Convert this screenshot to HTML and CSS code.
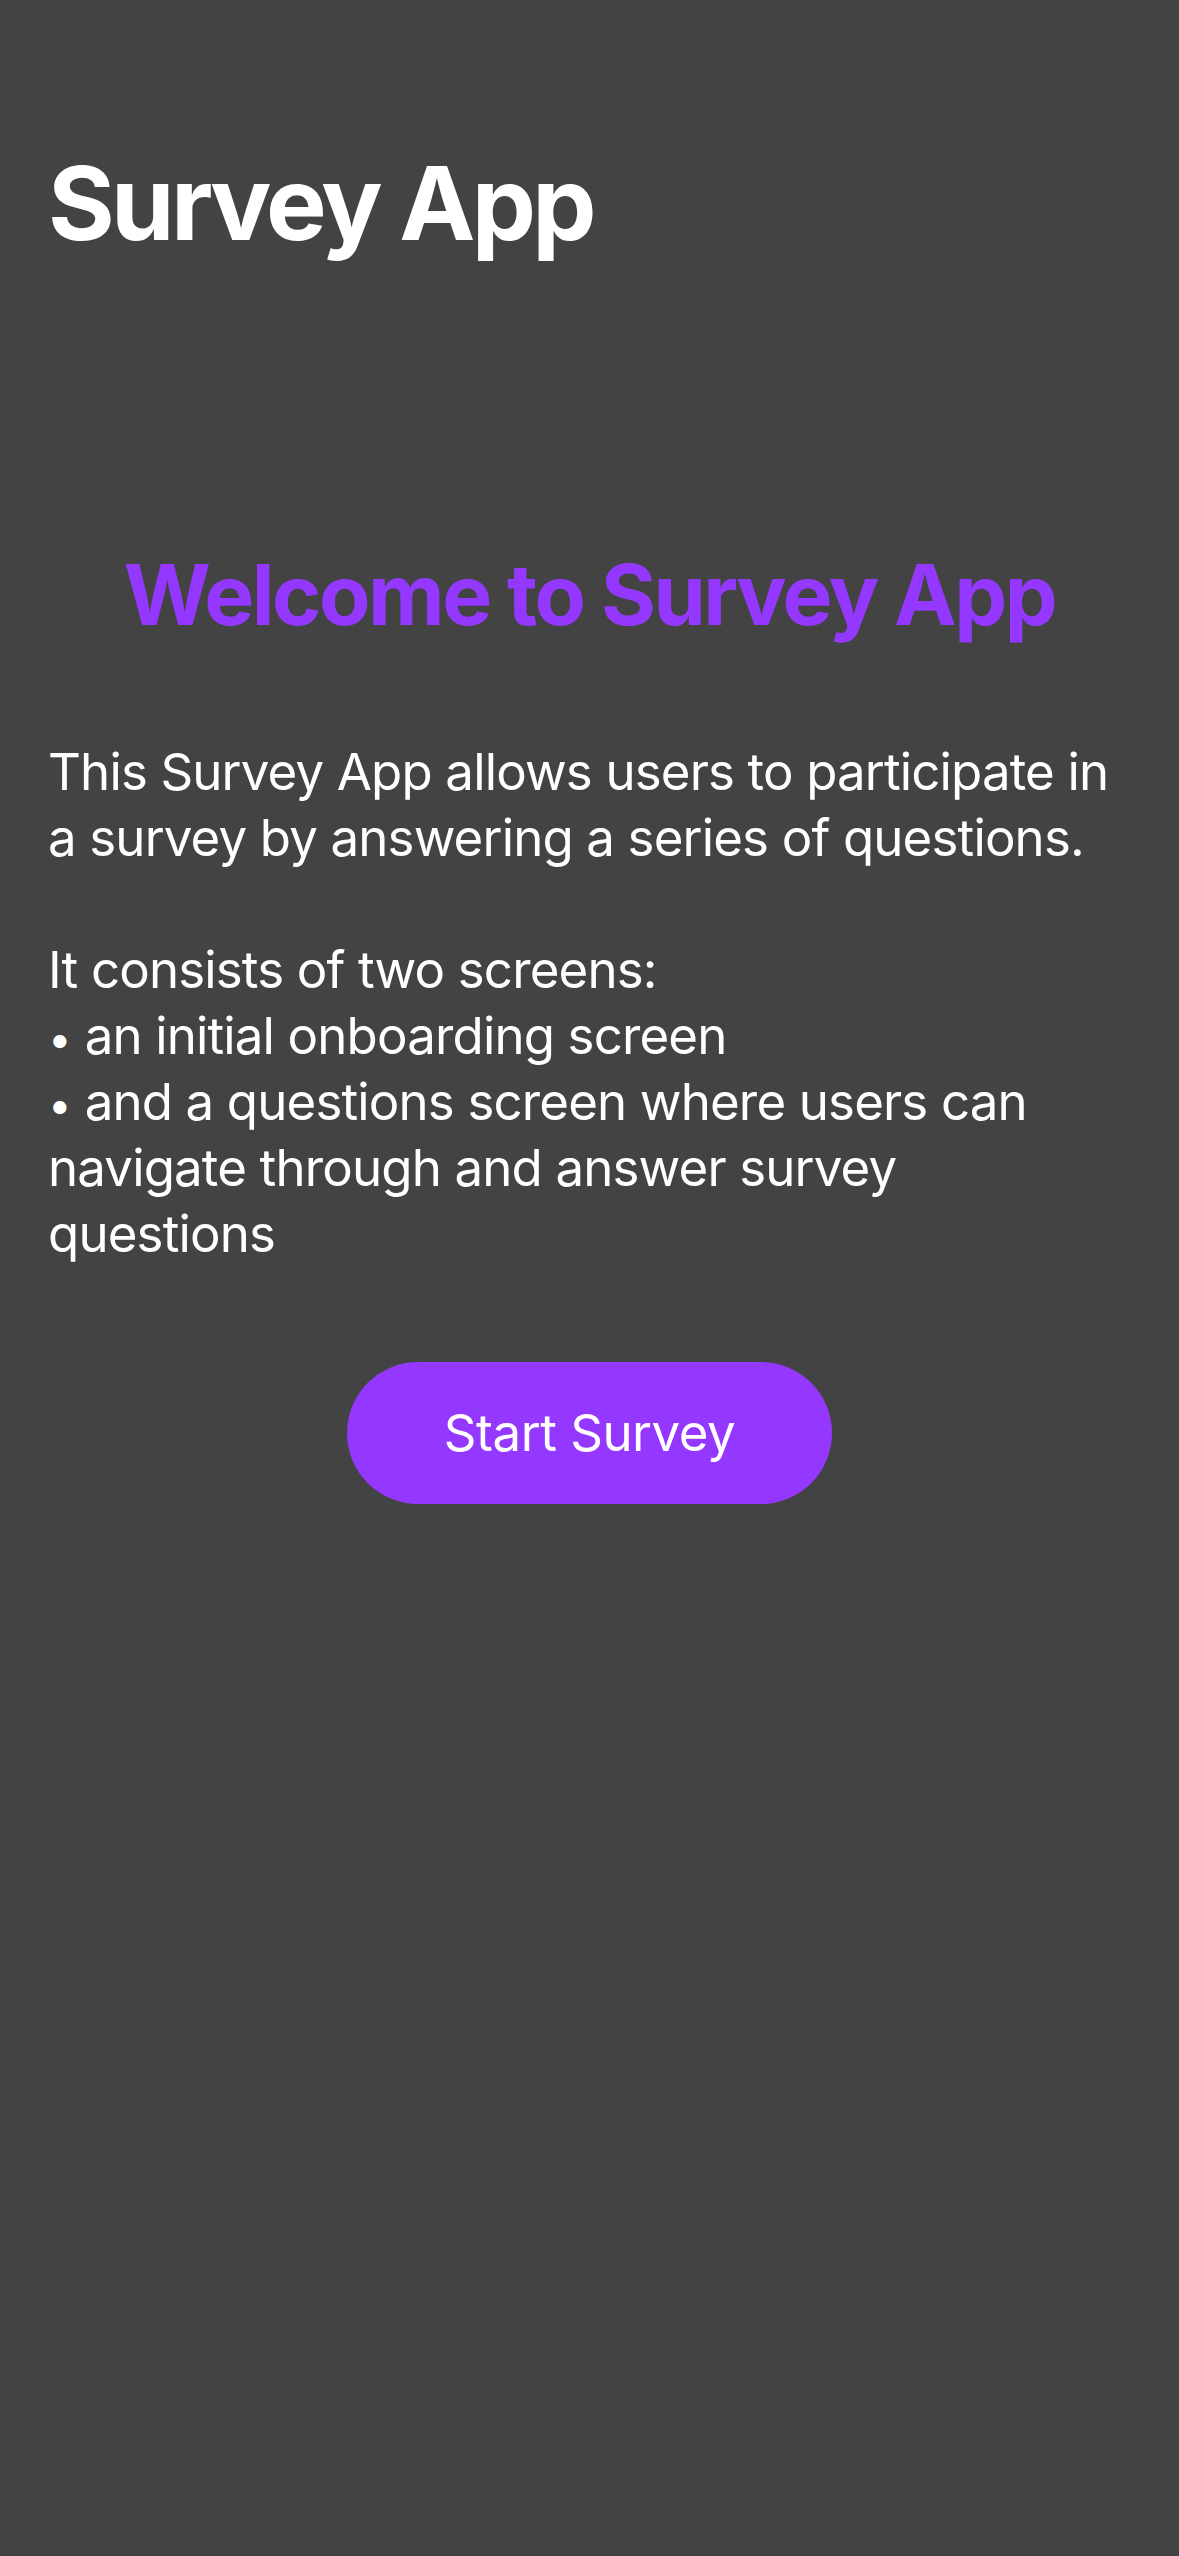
FILE: index.html
```html
<!DOCTYPE html>
<html lang="en">
<head>
<meta charset="utf-8">
<title>Survey App</title>
<link rel="stylesheet" href="styles.css">
</head>
<body>
<div class="screen">
  <header class="nav">
    <h1 class="nav-title">Survey App</h1>
  </header>
  <main class="content">
    <h2 class="welcome">Welcome to Survey App</h2>
    <div class="description">
      <p class="para">This Survey App allows users to participate in a survey by answering a series of questions.</p>
      <p class="para">It consists of two screens:</p>
      <ul class="screens-list">
        <li class="screens-item">an initial onboarding screen</li>
        <li class="screens-item">and a questions screen where users can navigate through and answer survey questions</li>
      </ul>
    </div>
    <div class="actions">
      <button class="start-btn" type="button">Start Survey</button>
    </div>
  </main>
</div>
</body>
</html>
```

FILE: styles.css
```css
* {
  box-sizing: border-box;
}

html, body {
  margin: 0;
  padding: 0;
  background: #434343;
}

body {
  font-family: Inter, "Noto Sans", "Liberation Sans", sans-serif;
  color: #ffffff;
  min-height: 2556px;
}

.screen {
  display: flex;
  flex-direction: column;
  padding: 0 48px;
}

.nav {
  padding-top: 142px;
}

.nav-title {
  margin: 0;
  font-size: 102px;
  line-height: 122px;
  font-weight: 700;
  letter-spacing: -3.7px;
}

.content {
  display: flex;
  flex-direction: column;
  padding-top: 281px;
}

.welcome {
  margin: 0;
  text-align: center;
  color: #9438ff;
  font-size: 84px;
  line-height: 100px;
  font-weight: 700;
  letter-spacing: -2.5px;
}

.description {
  margin-top: 94px;
  font-size: 51px;
  line-height: 66px;
  font-weight: 400;
  letter-spacing: -0.85px;
}

.para {
  margin: 0;
}

.para + .para {
  margin-top: 66px;
}

.screens-list {
  list-style: none;
  margin: 0;
  padding: 0;
}

.screens-item::before {
  content: "•";
  font-size: 42px;
  line-height: 0;
  letter-spacing: 0;
  margin-right: 13px;
}

.actions {
  display: flex;
  justify-content: center;
  padding-top: 95px;
}

.start-btn {
  border: none;
  background: #9438ff;
  color: #ffffff;
  font-family: inherit;
  font-size: 51px;
  line-height: 66px;
  font-weight: 400;
  letter-spacing: -0.5px;
  padding: 38px 97px;
  border-radius: 71px;
}
```
